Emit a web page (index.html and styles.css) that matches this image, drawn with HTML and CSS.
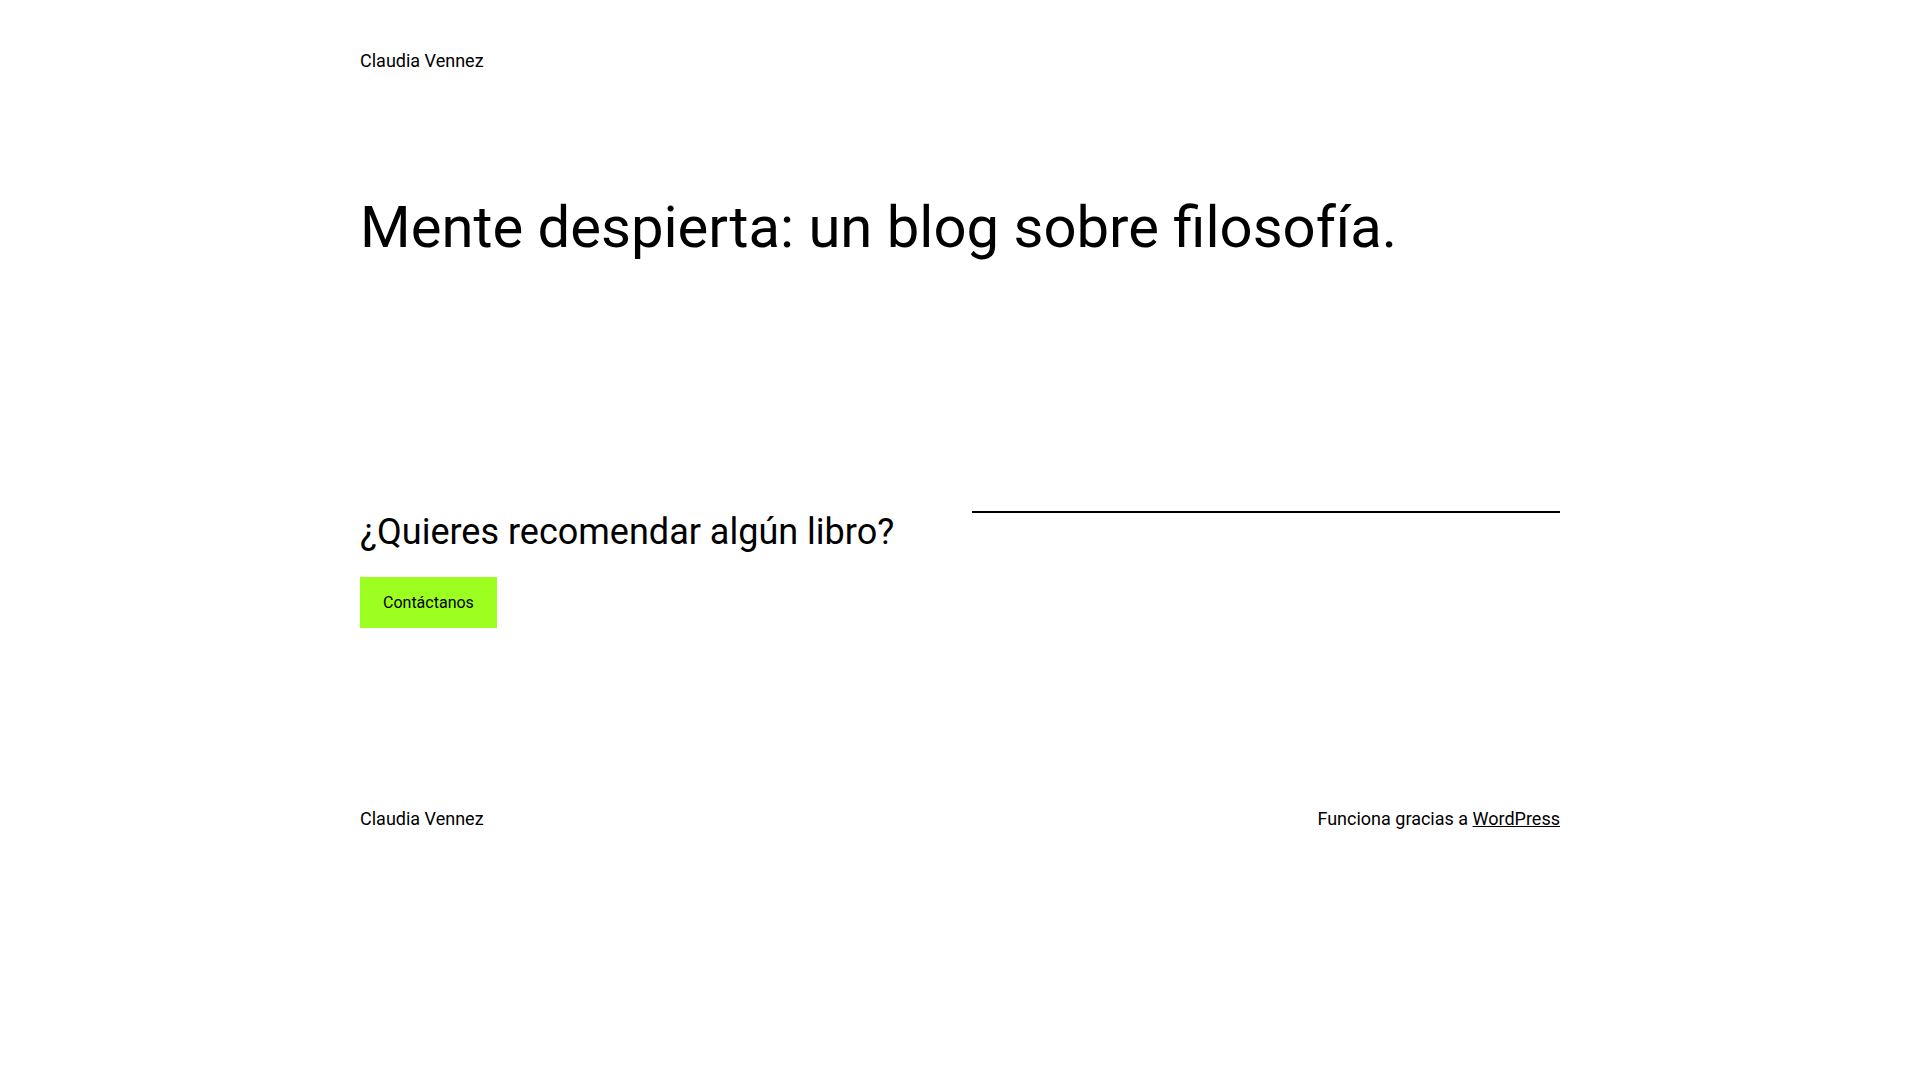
FILE: index.html
```html
<!DOCTYPE html>
<html lang="es">
<head>
<meta charset="utf-8">
<title>Claudia Vennez</title>
<link rel="stylesheet" href="styles.css">
</head>
<body>
<div class="site">
  <header class="site-header">
    <p class="site-title">Claudia Vennez</p>
  </header>
  <main class="main">
    <h1 class="hero-title">Mente despierta: un blog sobre filosofía.</h1>
    <section class="cta">
      <div class="cta-col">
        <h2 class="cta-title">¿Quieres recomendar algún libro?</h2>
        <a class="button" href="#">Contáctanos</a>
      </div>
      <div class="cta-col">
        <hr class="separator">
      </div>
    </section>
  </main>
  <footer class="site-footer">
    <p class="site-title">Claudia Vennez</p>
    <p class="credit">Funciona gracias a <a href="#">WordPress</a></p>
  </footer>
</div>
</body>
</html>
```
FILE: styles.css
```css
* { box-sizing: border-box; }
html, body { margin: 0; padding: 0; background: #fff; }
body {
  font-family: Roboto, "Liberation Sans", sans-serif;
  color: #000;
  font-size: 18px;
}
.site {
  width: 1200px;
  margin: 0 auto;
}
.site-header {
  padding-top: 50px;
  height: 192px;
}
.site-title {
  margin: 0;
  font-size: 18px;
  line-height: 22px;
}
.hero-title {
  margin: 0;
  font-weight: 400;
  font-size: 58px;
  line-height: 70px;
}
.cta {
  display: grid;
  grid-template-columns: 1fr 1fr;
  gap: 24px;
  margin-top: 248px;
}
.cta-title {
  margin: 0;
  font-weight: 400;
  font-size: 36px;
  line-height: 44px;
}
.button {
  display: inline-block;
  margin-top: 23px;
  background: #9dff20;
  color: #000;
  text-decoration: none;
  font-size: 16px;
  line-height: 21px;
  padding: 15px 23px;
}
.separator {
  margin: 1px 0 0;
  border: 0;
  border-top: 2px solid #000;
}
.site-footer {
  display: flex;
  justify-content: space-between;
  align-items: baseline;
  margin-top: 180px;
}
.credit {
  margin: 0;
  font-size: 18px;
  line-height: 22px;
}
.credit a { color: #000; text-decoration: underline; }
```
